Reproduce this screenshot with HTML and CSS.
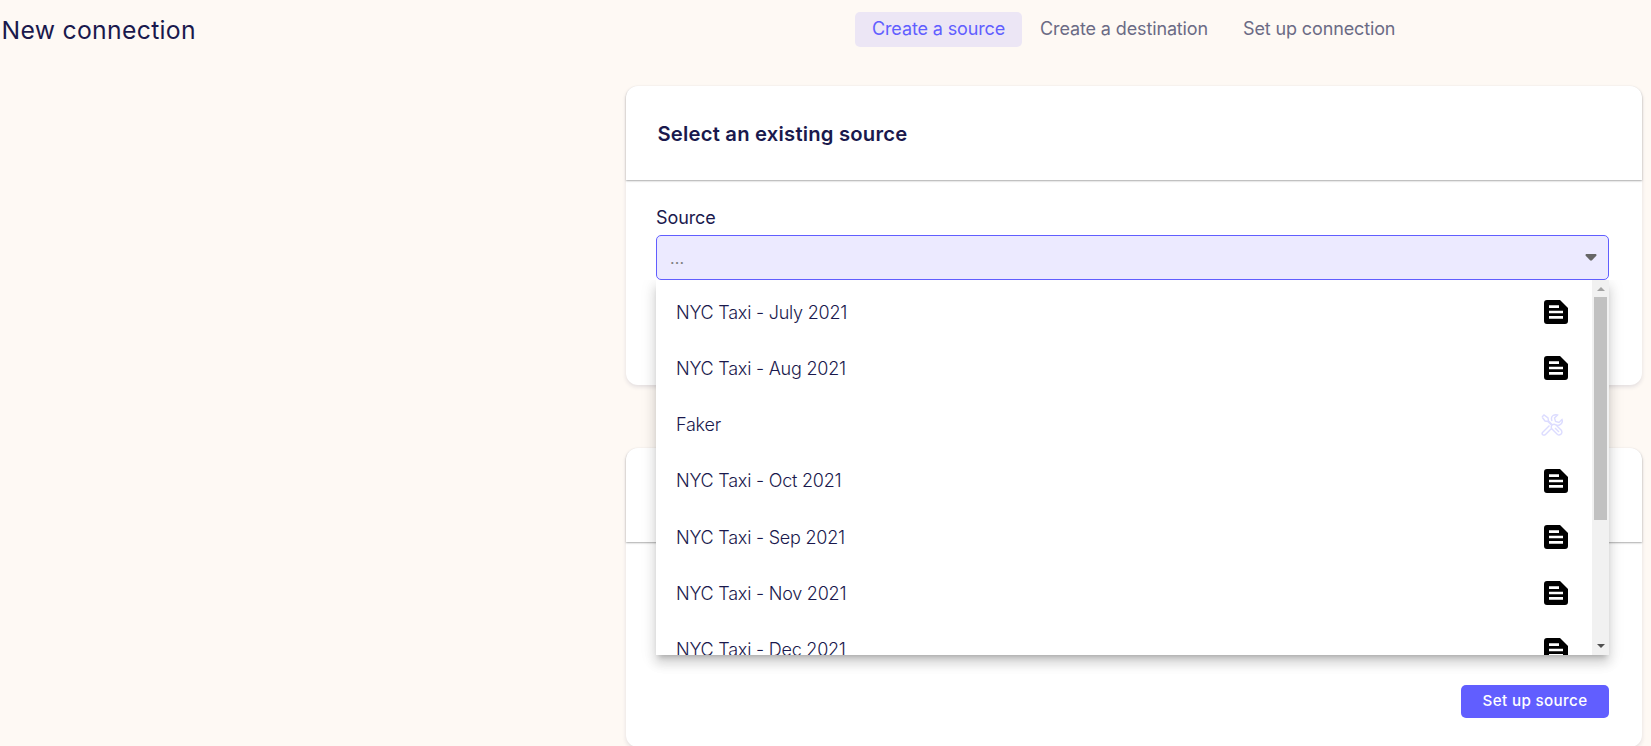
FILE: index.html
```
<!DOCTYPE html>
<html lang="en">
<head>
<meta charset="utf-8">
<title>New connection</title>
<link rel="stylesheet" href="styles.css">
</head>
<body>
<svg class="defs" width="0" height="0">
  <symbol id="file" viewBox="0 0 24 24"><path fill-rule="evenodd" d="M3 0H16L24 8V21Q24 24 21 24H3Q0 24 0 21V3Q0 0 3 0ZM5 5.3V8H15V5.3ZM5 10.7V13.3H19V10.7ZM5 16V18.7H19V16Z"/></symbol>
</svg>
<header class="topbar">
  <h1 class="page-title">New connection</h1>
  <nav class="steps">
    <span class="step active">Create a source</span>
    <span class="step">Create a destination</span>
    <span class="step">Set up connection</span>
  </nav>
</header>
<main class="content">
  <section class="card">
    <h2 class="card-head">Select an existing source</h2>
    <div class="card-body">
      <label class="label">Source</label>
      <div class="select">
        <span class="placeholder">...</span>
        <svg class="caret" width="12" height="7" viewBox="0 0 12 7"><path d="M1.2 0H10.8Q12 .6 11.3 1.7L7 6.3Q6 7.2 5 6.3L.7 1.7Q0 .6 1.2 0Z"/></svg>
        <div class="menu">
          <ul class="options">
            <li class="option"><span>NYC Taxi - July 2021</span><svg class="file"><use href="#file"/></svg></li>
            <li class="option"><span>NYC Taxi - Aug 2021</span><svg class="file"><use href="#file"/></svg></li>
            <li class="option"><span>Faker</span><svg class="tools" viewBox="0 0 22 22"><path d="M1 3L3 1L7 4L7.5 7L11 10.5M1 3L4 7L7 7.5L10.5 11M11 11Q13 9.500 15 11L20.500 16.500Q21.500 19 20 20.200Q18 21.500 16.500 20.500L11 15Q9.500 13 11 11M14 14L18 18M11 7Q9.500 3 12 1.500Q14 .3 16.500 1L13.500 4L14.500 7.500L18 8.500L21 5.500Q22 8 20 10Q18 12 15 11M8.500 11.500L1.500 18.500M11 14L4.500 20.500M1.500 18.500Q.5 20 2 21M4.500 20.500Q3.500 21.500 2 21"/></svg></li>
            <li class="option"><span>NYC Taxi - Oct 2021</span><svg class="file"><use href="#file"/></svg></li>
            <li class="option"><span>NYC Taxi - Sep 2021</span><svg class="file"><use href="#file"/></svg></li>
            <li class="option"><span>NYC Taxi - Nov 2021</span><svg class="file"><use href="#file"/></svg></li>
            <li class="option"><span>NYC Taxi - Dec 2021</span><svg class="file"><use href="#file"/></svg></li>
          </ul>
          <div class="scrollbar">
            <svg class="arrow up" width="8" height="4" viewBox="0 0 8 4"><path d="M0 4L4 0L8 4Z"/></svg>
            <div class="thumb"></div>
            <svg class="arrow down" width="8" height="4" viewBox="0 0 8 4"><path d="M0 0L4 4L8 0Z"/></svg>
          </div>
        </div>
      </div>
    </div>
  </section>
  <section class="card">
    <div class="card-head"></div>
    <div class="card-body end"><button class="submit">Set up source</button></div>
  </section>
</main>
</body>
</html>
```
FILE: styles.css
```
* { box-sizing: border-box; }
body {
  margin: 0;
  height: 746px;
  overflow: hidden;
  background: #fef9f4;
  color: #1a194d;
  font-family: Inter, "Liberation Sans", sans-serif;
  font-size: 18px;
}
.defs { display: block; }
.topbar { display: flex; height: 86px; padding: 12px 0 0 1.5px; align-items: flex-start; }
.page-title { width: 853.5px; margin: 0; font-size: 24.75px; line-height: 36px; font-weight: 400; letter-spacing: .3px; }
.steps { display: flex; gap: 1px; }
.step { padding: 0 17px; line-height: 33px; height: 35px; border-radius: 5px; font-weight: 400; letter-spacing: -.13px; color: #6b6b85; white-space: nowrap; }
.step.active { background: #ece6f5; color: #615eff; }
.content { display: flex; flex-direction: column; gap: 63px; width: 1016px; margin-left: 626px; }
.card { height: 299px; border-radius: 12px; background: #fff; box-shadow: 0 2px 4px rgba(26, 25, 77, .12); }
.card-head {
  height: 94px;
  margin: 0;
  padding: 0 31.5px;
  border-radius: 12px 12px 0 0;
  background: #fff;
  box-shadow: 0 1px 2px rgba(0, 0, 0, .33);
  font-size: 20.25px;
  line-height: 96px;
  font-weight: 600;
  letter-spacing: .2px;
}
.card-body { height: 205px; padding: 27px 33px 0 30px; }
.label { display: block; height: 28px; line-height: 22px; letter-spacing: -.1px; }
.select {
  position: relative;
  display: flex;
  align-items: center;
  justify-content: space-between;
  height: 45px;
  padding: 0 11px 0 13px;
  border: 1px solid #615eff;
  border-radius: 5px;
  background: #eceaff;
}
.placeholder { color: #808080; font-size: 16px; letter-spacing: .1px; }
.caret { fill: #666; }
.menu {
  position: absolute;
  z-index: 2;
  top: 44px;
  left: -1px;
  display: flex;
  width: 953px;
  height: 375px;
  background: #fff;
  box-shadow: 0 5px 5px -3px rgba(0, 0, 0, .2), 0 8px 10px 1px rgba(0, 0, 0, .12), 0 4px 16px 2px rgba(0, 0, 0, .07);
  clip-path: inset(0 -40px -40px -40px);
}
.options { flex: 1; margin: 0; padding: 4px 24px 0 20px; list-style: none; overflow: hidden; }
.option { display: flex; align-items: center; justify-content: space-between; height: 56.25px; font-weight: 300; letter-spacing: -.23px; }
.file { width: 24px; height: 24px; }
.tools { width: 22px; height: 22px; margin-right: 5px; fill: none; stroke: #dcdcff; stroke-width: 1.4; }
.scrollbar { display: flex; flex-direction: column; align-items: center; width: 17px; padding: 7px 0; background: #f1f1f1; }
.thumb { width: 13px; height: 223px; margin-top: 6px; background: #c1c1c1; }
.up { fill: #a3a3a3; }
.down { margin-top: auto; fill: #505050; }
.end { display: flex; justify-content: flex-end; padding-top: 143px; }
.submit {
  width: 148px;
  height: 33px;
  padding: 0 0 2px;
  border: 0;
  border-radius: 5px;
  background: #615eff;
  color: #fff;
  font: 500 15.2px Inter, sans-serif;
  letter-spacing: .35px;
}
```
